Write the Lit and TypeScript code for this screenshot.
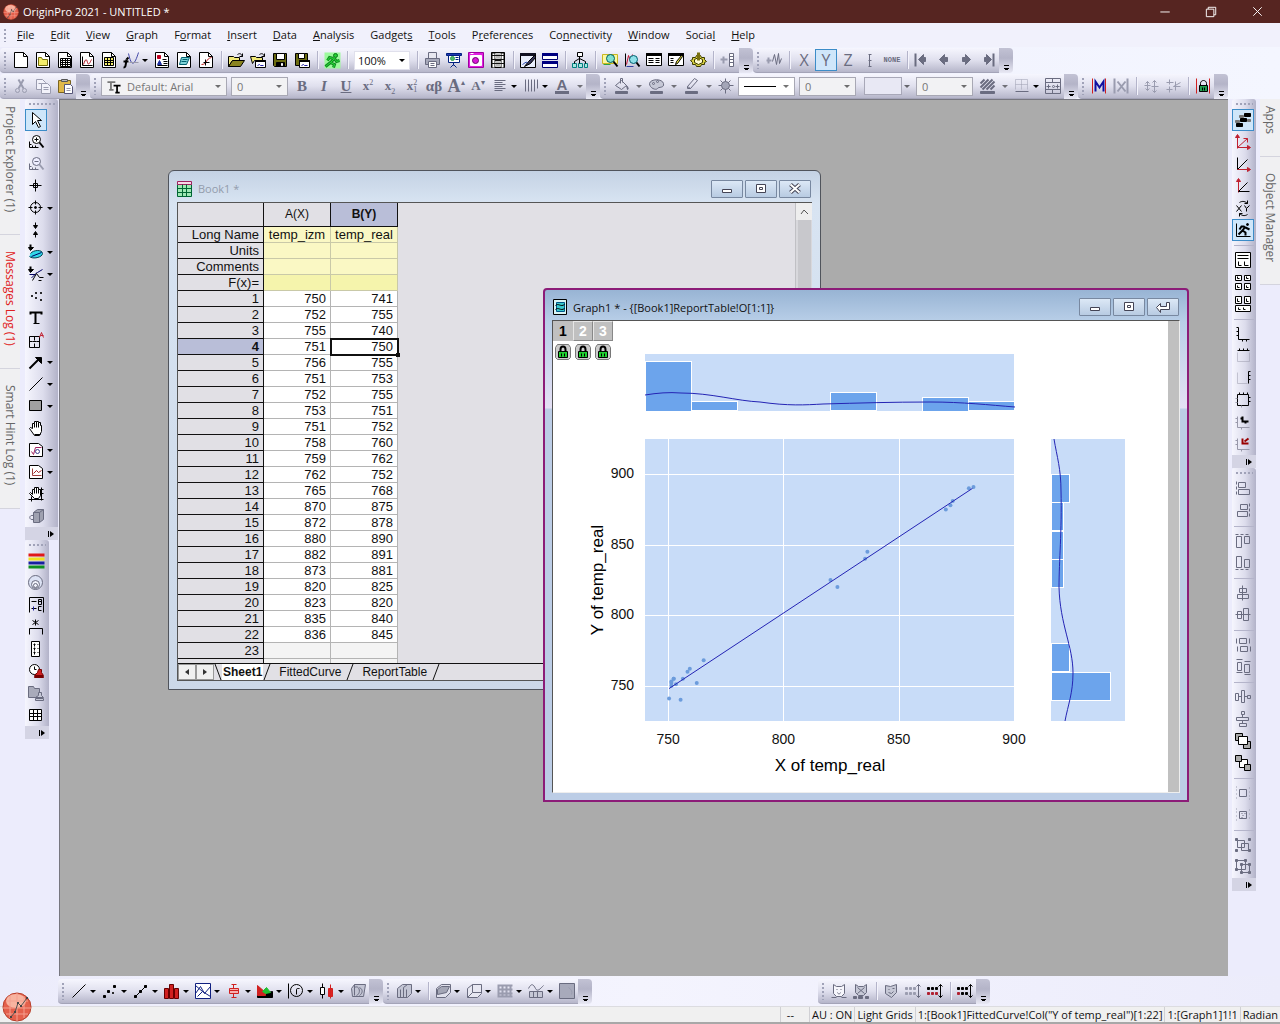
import { LitElement, html, svg, css, nothing, TemplateResult } from "lit";
import { customElement } from "lit/decorators.js";
import { classMap } from "lit/directives/class-map.js";

/* Icon strokes are "stroke;fill;path;width". A path that starts with @ is a circle: @cx,cy,r */
const G = "#6a6c80";
const L = "#9a9caf";
const PAGE = "#000;#fff;M1 0h9l4 4v11H1z|#000;none;M10 0v4h4";
const ICONS: Record<string, string> = {
  project: PAGE,
  folder: PAGE + "|#77700a;#f4ee6c;M3 5h3l1 2h5v6H3z",
  workbook: PAGE + "|#000;none;M3 6h10v8H3zM3 8h10M3 10h10M3 12h10M5 6v8M8 6v8M10 6v8",
  graph: PAGE + "|#000;none;M3 4v9h10|#b01020;none;M4 12c2-6 3-6 4-2s3-1 4-3",
  matrix: PAGE + "|#000;#f4ee6c;M3 5h9v8H3z|#000;none;M3 8h9M3 10h9M6 5v8M9 5v8",
  func: "#000;none;M0 15c2 0 2-1 3-8M0 9h5;2|#000;none;M3 7l2-2;2|#4448a8;none;M5 1c3 14 6 12 10-1|#99a;none;M6 10h9",
  layout: PAGE + "|#c00020;#c00020;M3 3h3v3H3z|#2030a0;#2030a0;M3 12l2-4 2 4z|#000;none;M8 7h4M9 9h4M9 11h4M3 13h10",
  notes: PAGE + "|#006070;#7fd4d8;M5 5h8l-3 7H3z|#006070;none;M6 7h5M5 9h5",
  digitize: PAGE + "|#c02020;none;M3 12c6 0 4-6 10-7|#000;none;M7 7v6M5 10h6",
  open: "#000;#f0e878;M0 4h5l1 1h5v3H4l-4 6z|#000;#8a8420;M4 8h12l-4 6H0z|#000;none;M9 2c3-2 4 0 5 2M14 1v3h-3",
  opentpl: "#000;#f0e878;M0 4h5l1 1h6v3H4l-2 3z|#000;none;M9 2c3-2 4 0 5 2M14 1v3h-3|#000;#fff;M5 8h10v7H5z|#000;#446;M5 8h10v1H5z|#22a;none;M7 13l2-1 1 1h3",
  save: "#000;#6b6b10;M1 1h13v13H2l-1-1z|#000;#fff;M4 1h8v6H4z|#000;#000;M4 10h8v4H4z|#fff;#fff;M9 11h1v2H9z",
  savetpl: "#000;#6b6b10;M1 1h12v12H1z|#000;#fff;M4 1h6v5H4z|#000;#fff;M5 8h10v7H5z|#000;#446;M5 8h10v1H5z|#22a;none;M7 13l2-1 1 1h3",
  run: "none;#9dfa9d;M0 0h16v16H0z|#087818;#20d030;@11,3,2|#108a20;none;M10 6L6 10l4 2-1 3M9 6L5 5 3 8M6 10l-5 4M10 6l2 3 3-1;3|#25e035;none;M10 6L6 10l4 2-1 3M9 6L5 5 3 8M6 10l-5 4M10 6l2 3 3-1",
  print: `${G};#e8e8f0;M4 0h8v6H4z|${G};#a7a9ba;M1 6h14v6H1z|${G};#fff;M4 9h8v6H4z|${G};none;M6 11h4M6 13h4`,
  slides: "#002080;#2038b0;M0 1h15v2H0z|#002080;#fff;M2 3h11v7H2z|#30a050;#50b870;@6,6,2|#002080;none;M9 5h3M9 7h3M7 10v3M4 15l3-3 3 3",
  camera: "#a000a0;#e020e0;M0 0h15v15H0z|#fff;#fff;M2 3h11v10H2z|#700070;#d818d8;@7,8,3|#fff;none;M2 1h3",
  film: "#000;#111;M1 0h13v15H1z|#ccc;#b8b8b8;M5 1h5v5H5zM5 9h5v5H5z|#fff;none;M3 1v14M12 1v14;2|#111;none;M1 3h13M1 7h13M1 11h13",
  brush: "#000;#e9eefc;M0 1h15v14H0z|#112;#112;M0 1h15v2H0z|#000;#335;M15 2L8 9l-4 5 6-3 5-6z|#2848b0;none;M2 12c2-1 3-3 5-2",
  split: "#000070;#fff;M0 1h15v6H0zM0 9h15v6H0z|#000080;#000080;M0 1h15v2H0zM0 9h15v2H0z",
  tree: "#000;#fff;M5 0h5v4H5z|#008080;#a8e8e0;M0 11h4v4H0zM6 11h4v4H6zM12 11h3v4h-3z|#000;none;M7 4v7M2 11V9l5-3 6 3v2",
  find: "#c8b820;#fbf7a0;M0 2h15v9H0z|#006060;#7fe0d0;@8,6,4|#000;none;M11 9l4 5;2|#30a040;none;M1 12h7",
  findgraph: "#000;none;M1 1v13|#c01030;none;M2 12l2-9 2 5 2-6|#006070;#8fe0e8;@9,7,4|#000;none;M12 10l3 4;2|#3040a0;none;M2 14h7",
  results: "#000;#fff;M0 1h15v12H0z|#000;#000;M0 1h15v2H0z|#000;none;M2 6h5M2 8h5M2 10h5M9 6h4M9 8h4M9 10h4",
  script: "#000;#fff;M0 1h15v12H0z|#000;#000;M0 1h15v2H0z|#000;none;M2 6h3M2 8h3M2 10h3|#000;#e8e040;M13 3l1 1-5 7-2 1 1-3z",
  gear: "#3a3a00;#d8d040;M0 8l2-1 0-2 3 0 1-2 4 0 1 2 3 0 0 2 2 2-2 1 0 2-3 0-1 2H6l-1-2H2v-2z|#3a3a00;#fffbd0;M4 7l4-2 4 2v3l-4 2-4-2z|#776f10;none;M8 0v8;3",
  addcol: `${L};none;M0 7h7M3 4v7;2|${G};#fff;M9 1h4v13H9z|${G};none;M9 4h4M9 7h4M9 10h4`,
  wave: `${L};none;M0 8h5M2 5v6;2|${G};none;M6 9l2-7 2 10 2-11 1 10 2-5`,
  errbar: `${G};none;M7 2v12M6 2h3M6 14h3M6 8h3`,
  first: `${G};none;M1 1v13;2|${G};${G};M4 7l5-5v3h2v4H9v3z`,
  prev: `${G};${G};M3 7l5-5v3h3v4H8v3z`,
  next: `${G};${G};M12 7L7 2v3H4v4h3v3z`,
  last: `${G};none;M13 1v13;2|${G};${G};M11 7L6 2v3H4v4h2v3z`,
  cut: `${L};none;M5 1l5 9M10 1L5 10;2|${L};none;@4,12,2|${L};none;@11,12,2`,
  copy: `${L};#f2f2fa;M1 1h6l3 3v7H1z|${L};#f2f2fa;M6 5h6l3 3v7H6z|${L};none;M8 9h5M8 11h5M3 5h3`,
  paste: "#7a6420;#e0b848;M1 2h12v12H1z|#555;#bbb;M4 1h6v2H4z|#557;#fff;M7 6h6l2 2v7H7z|#99a;none;M9 10h4M9 12h4",
  tt: "#777;none;M0 3h9M4 3v9M2 12h5;2|#000;none;M7 7h8M11 7v8M9 15h5;2",
  alignl: `${G};none;M2 2h11M2 4h8M2 6h11M2 8h8M2 10h11M2 12h8`,
  cols: `${G};none;M2 1v12M5 1v12M8 1v12M11 1v12M14 1v9`,
  bucket: `${G};none;M2 7l6-5 5 5-5 4zM7 5V0h2v4|${G};${G};M13 7c2 2 2 4 1 4zM2 13h12v2H2z`,
  palette: `${G};#c6c8d6;M1 5c1-5 13-5 14 0s-5 3-6 5-8 0-8-5z|${G};none;@5,5,1|${G};none;@9,3,1|${G};${G};M2 13h12v2H2z`,
  pen: `${G};none;M4 8l7-8 3 2-7 8H4zM4 8l3 2|${G};${G};M2 13h12v2H2z`,
  bulb: `${G};#a4a6b8;@7,7,4|${G};none;M7 0v3M7 11v4M0 7h3M11 7h4M2 2l2 2M12 2l-2 2M2 12l2-2M12 12l-2-2`,
  hatch: `${G};none;M1 5l4-4M1 9l8-8M3 11L13 1M7 11l8-8M11 11l4-4;2|${G};${G};M1 13h14v2H1z`,
  gridl: `${L};none;M1 1v10M13 1v10M1 1h12M7 1v10M1 6h12;.5|${G};none;M1 13h13`,
  merge: `${G};none;M0 0h15v15H0zM0 4h15M0 11h15M7 0v4M7 11v4M1 8h4M10 8h4M3 6v4M12 6v4|${G};none;@8,8,1`,
  mask: "#d02020;none;M1 0v15M14 0v15|#1010a0;none;M4 13V3l4 6 4-6v10;2",
  unmask: `${L};none;M1 0v15M14 0v15M4 3l8 10M12 3L4 13;2`,
  swap: `${L};none;M4 3v9M1 7h6M2 5l2-2 2 2M2 10l2 2 2-2M11 2v12M8 8h7M9 4l2-2 2 2M9 12l2 2 2-2`,
  swap2: `${L};none;M4 1v5M1 4h7M4 8v6M1 11h6M10 3v9M8 8h7M8 8l7-4`,
  lock: "#d02020;none;M1 0v15M14 0v15|#000;#20a050;M4 7h8v6H4z|#000;none;M5 7V5c0-4 6-4 6 0v2M7 9v3M9 9v3",
  padlock: "#777;#ccc;M2 0h11l2 3v10l-2 2H2l-2-2V3z|#000;#20d030;M3 7h9v6H3z|#000;none;M5 7V5c0-4 5-4 5 0v2;2|#000;none;M6 9v3M9 9v3",
  pointer: "#000;#fff;M4 0v12l3-3 3 6 2-1-3-6h4z",
  zoomin: "#000;#fff;@8,5,4|#000;none;M6 5h4M8 3v4M1 7v6h9M1 10h2M4 13v-2M7 13v-2|#000;none;M11 8l4 5;2",
  zoomout: `${G};#eef;@8,5,4|${G};none;M6 5h4M1 7v6h9M1 10h2M4 13v-2M7 13v-2|${L};none;M11 8l4 5;2`,
  cross: "#000;none;M7 1v12M1 7h12M5 5h4v4H5z",
  target: "#000;none;@7,7,5|#000;none;M7 0v4M7 10v4M0 7h4M10 7h4|#000;#000;@7,7,1",
  vpair: "#000;none;M7 0v5M7 10v5|#000;#000;M5 3h4L7 6zM5 12h4L7 9z",
  bean: "#004050;#30d8e8;M2 9c3-4 12-4 12 0s-10 6-13 3|#006;none;M3 12l10-4|#000;none;M2 0v4;2|#000;#000;M0 3h5L2 6z",
  curve: "#000060;none;M3 11c4-2 3-4 6-5l5-3M1 8h6|#000;none;M2 0v4;2|#000;#000;M0 3h5L2 6z|#000;none;M4 14l4-7 3 4h4M10 14h3",
  dots: "#000;#000;M3 7h1v1H3zM7 4h1v1H7zM12 4h1v1h-1zM7 9h1v1H7zM12 11h1v1h-1z",
  text: "#000;none;M2 4V2h11v2M7 2v11;2|#000;none;M5 13h6",
  regionA: "#000;none;M1 4h10v11H1zM6 4v4M6 11v4M1 9h3M8 9h3M4 9h4|#c02030;none;M11 5l2-5 2 5M12 3h3",
  arrow: "#000;none;M1 14L11 4;2|#000;#000;M7 3h6v6z",
  line: "#000;none;M1 14L14 1",
  rect: "#000;#a0a0a0;M1 2h12v10H1z",
  hand: "#000;#fff;M4 8V3h2V1h2v0h2v1h2v3h1v6l-2 4H6L1 8l1-1z|#000;none;M6 3v4M8 1v6M10 2v5M6 14h6",
  sqrt: "#000;#fff;M1 1h9l4 3v10H1z|#a02060;none;M3 9l2 3 2-7h6|#404090;none;@9,9,2",
  pgraph: "#000;#fff;M1 1h9l4 3v10H1z|#a04040;none;M4 4v7h9|#a02020;none;M5 9l3-3 2 2 3-2",
  handax: "#000;#fff;M4 8V3h2V1h4v2h2v6l-2 3H6L1 7l1-1z|#000;none;M6 3v4M8 1v6M10 3v4M0 13h15M3 10v5M13 1v13M12 3h3M12 7h3",
  cube: `${G};#9fa1b0;M5 4l4-3h6v10l-4 3H5zM5 4h6v10M11 4l4-3|${G};none;M5 7c-5-1-5 5 0 4`,
  bars4: "none;#e01818;M0 0h16v3H0z|none;#f0e020;M0 4h16v3H0z|none;#1820a0;M0 8h16v3H0z|none;#109020;M0 12h16v3H0z",
  rings: `${G};#dce2f4;@7,7,7|${G};#f0f2fb;@7,9,4|${G};none;@7,10,2`,
  axisbc: "#000;none;M1 15V0h14v15M3 4h5M3 11h5|#2020a0;none;M5 9v4|#000;none;M10 2v5M10 2h3v5h-3M10 4h3M13 9h-3v4h3",
  starbr: "#000;none;M7 0v6M4 1l6 4M10 1L4 5|#000;none;M1 15V9h13v6",
  plusbox: "#000;#fff;M3 0h8v15H3z|#000;none;M5 3h2M9 3h1M5 7h2M9 7h1M5 11h2M9 11h1M6 2v3M6 6v3M6 10v3",
  stamp: "#000;#fff;@6,6,5|#000;none;M6 3v3h2|#700;#d02020;M10 6h3v3l2 3H6l3-3zM6 13h9v1H6z",
  gstamp: `${G};#a9abba;M0 1h5l1 2h5v9H0z|${G};#c6c8d6;M10 7h3v3l2 2H7l3-2zM7 13h8v2H7z`,
  table: "#000;#fff;M1 2h12v11H1z|#000;none;M1 6h12M1 9h12M5 2v11M9 2v11",
  blocks: "#000;#000;M9 1h6v3H9zM5 6h6v3H5zM1 11h6v3H1z|#777;#777;M4 3h4v2H4zM12 7h3v2h-3zM0 8h4v2H0z",
  axr1: "#c02030;none;M2 14V2M2 13h12M2 13L12 4M8 4h4v4|#c02030;#c02030;M0 3l2-3 2 3zM12 11l3 2-3 2z",
  axr2: "#000;none;M2 13V1M2 13L12 3|#c02030;none;M2 13h12|#c02030;#c02030;M12 11l3 2-3 2z",
  axr3: "#c02030;none;M3 14V2|#c02030;#c02030;M1 3l2-3 2 3z|#000;none;M3 13h11M3 13L12 4",
  xy: "#000;none;M1 5l5 6M6 5l-5 6M9 5l2 3 3-3M11 8v3|#000;none;M4 2c3-2 6-1 8 1M12 14c-3 2-6 1-8-1M9 3h3V0M7 13H4v3",
  runner: "#000;none;M1 1v13h14|#000;#000;@12,2,1|#000;none;M10 4L7 8l3 2v3M9 4L6 4 4 7M7 8l-4 4M10 5l4 2;2",
  lay1: "#000;#fff;M0 0h15v15H0z|#000;none;M2 3h11M2 6h11M3 9v4h3M9 9v4h4",
  lay4: "#000;#fff;M0 1h6v5H0zM9 1h6v5H9zM0 9h6v6H0zM9 9h6v6H9z|#000;none;M2 2v2h2M11 2v2h2M2 11v2h2M11 11v2h2",
  lay3: "#000;#fff;M0 0h6v7H0zM9 0h6v7H9zM0 9h15v6H0z|#000;none;M2 2v3h2M11 2v3h2M3 11v2h2M8 11v2h2",
  axL: "#000;none;M3 1v12h11M1 1h2M1 5h2M1 9h2M7 13v2M11 13v2",
  axT: "#000;none;M2 2h12M4 0v2M8 0v2M12 0v2|#99a;none;M2 4v9h12V4;.5",
  axR: "#000;none;M13 1v12M15 1h-2M15 5h-2M15 9h-2|#99a;none;M2 2v11h10;.5",
  axB: "#000;none;M2 2h11v11H2zM4 0v2M8 0v2M12 0v2M15 5h-2M15 9h-2|#99a;none;M0 6h2M0 10h2M6 13v2",
  axS: "#99a;none;M2 2v11h12M0 4h2M0 8h2M6 13v2|#000;none;M7 2v5h6M5 4h2M10 7v2;2",
  axC: "#99a;none;M2 2v11h12M0 4h2M0 8h2M6 13v2|#900;none;M7 2v5h6M9 5l4-3;2",
  al1: `${G};none;M1 0v3M1 5v3M1 10v3M3 1h7v5H3zM3 8h11v5H3z`,
  al2: `${G};none;M14 0v3M14 5v3M14 10v3M5 1h7v5H5zM2 8h10v5H2z`,
  al3: `${G};none;M0 1h3M5 1h3M10 1h3M1 3h5v11H1zM9 3h5v7H9z`,
  al4: `${G};none;M0 14h3M5 14h3M10 14h3M1 1h5v11H1zM9 4h5v8H9z`,
  al5: `${G};none;M7 0v15M4 3h7v4H4zM2 9h11v4H2z`,
  al6: `${G};none;M0 7h15M2 4h4v7H2zM8 1h5v12H8z`,
  al7: `${G};none;M4 1h7v5H4zM5 9h7v5H5zM1 1v5M14 1v5M2 9v5M15 9v5`,
  al8: `${G};none;M2 3h4v8H2zM9 5h5v8H9zM1 0h6M9 2h6M9 15h6M1 13h6`,
  al9: `${G};none;M0 4h3v7H0zM6 1h3v12H6zM12 6h3v3h-3zM3 7h3M9 7h3`,
  al10: `${G};none;M6 0h3v3H6zM1 6h12v3H1zM4 12h7v3H4zM7 3v3M7 9v3`,
  front: "#000;#aaa;M0 0h7v7H0zM8 8h7v7H8z|#000;#fff;M3 3h9v8H3z",
  back: "#000;#fff;M4 4h8v8H4z|#000;#aaa;M0 0h6v6H0zM9 9h6v6H9z",
  grp1: `${G};none;M4 4h7v7H4z|${L};none;M1 1v1M1 4v1M1 8v1M1 12v1M14 2v1M14 6v1M14 10v1M14 13v1`,
  grp2: `${G};none;M4 4h7v7H4zM6 6h1M9 6h1M7 8h1M6 10h1|${L};none;M1 1v1M1 4v1M1 8v1M1 12v1M14 2v1M14 6v1M14 10v1`,
  grp3: `${G};none;M2 3h7v7H2zM6 6h7v7H6z|${G};${G};M0 1h2v2H0zM13 1h2v2h-2zM0 12h2v2H0zM13 12h2v2h-2z`,
  grp4: `${G};none;M1 1h9v9H1zM6 5h8v8H6z|${G};${G};M0 0h2v2H0zM9 0h2v2H9zM0 9h2v2H0zM5 4h2v2H5zM13 4h2v2h-2zM5 12h2v2H5zM13 12h2v2h-2z`,
  scatter: "#000;#000;M1 12h2v2H1zM5 7h2v2H5zM10 9h1v1h-1zM11 2h2v2h-2z",
  linesym: "#000;none;M1 14L13 2|#000;#000;M1 12h2v2H1zM6 7h2v2H6zM11 2h2v2h-2z",
  column: "#600;#d02020;M0 5h4v10H0zM5 1h4v14H5zM10 5h4v10h-4z",
  waveplot: "#102080;#fff;M0 0h15v15H0z|#102080;none;M0 10L5 3l4 7 6-7M0 2l7 6 8 5M2 13l5-5",
  box: "#d02020;#f8b0b0;M3 5h9v5H3zM5 1h5M7 1v4M7 10v4M5 14h5M3 7h9",
  area: "#000;#000;M0 14V11l15-3v6z|#d02020;#d02020;M0 2l8 7v3H0z|#20c030;#20c030;M5 8l4-4 4 5-5 1z",
  polar: "#000;none;M0 0v15M8 11V6c0-1 1-1 3-1|#000;none;@8,7,6",
  candle: "#000;#fff;M1 4h4v7H1zM3 0v4M3 11v4|#d02020;#e02020;M9 5h4v8H9zM11 1v14",
  c3d: `${G};#c3c5d4;M1 5l3-4h11l-2 12H2z|${G};none;M4 4c5-3 7 6 2 8M9 4c4 2 3 6 0 8M4 1v11`,
  bar3d: `${G};#c3c5d4;M1 5l5-4h9v9l-4 4H1z|${G};none;M4 6v8M7 4v10M10 6v8M7 4l4-3`,
  surf: `${G};#e0e0ec;M1 5l5-4h9v8l-5 5H1z|${G};#a4a6b6;M2 6l4-3h8l-3 6-9 2z`,
  box3d: `${G};#e8e8f2;M1 5l5-4h9v9l-4 4H1zM6 1v8L1 14M6 9h9`,
  mesh: `${L};none;M1 1v13M5 1v13M9 1v13M13 1v13M0 2h15M0 6h15M0 10h15M0 13h15;2`,
  contour: `${G};none;M0 5c3-6 5-4 7 0s5 0 8-3|${G};#c6c8d6;M1 8h13v6H1zM5 8v6M9 8v6`,
  image: `${G};#a8aabb;M0 0h15v15H0z|${L};none;M9 4c3 2 4 4 3 7`,
  cat: `${G};#f6f6fc;M2 1l3 2h5l3-2v9l-3 3H5l-3-3z|${G};none;M5 6h1M9 6h1M6 9c1 2 2 2 3 0M0 14h5M10 14h5`,
  cat2: `${G};#c6c8d6;M2 1l3 2h5l3-2v8l-3 3H5L2 9z|${G};none;M4 4l7 6M11 4l-7 6|${G};${G};M0 13h3v2H0zM5 13h4v2H5zM12 13h3v2h-3z`,
  shield: `${G};#c6c8d6;M2 2l5 1 6-2v8l-5 5-6-4z|${G};none;M5 6h1M9 5h2M5 9l3 1 2-2`,
  sp1: `${L};${L};M0 4h2v2H0zM4 4h2v2H4zM8 4h2v2H8zM0 9h2v2H0zM4 9h2v2H4zM8 9h2v2H8z|${G};none;M13 1v13M11 3l2-2 2 2M11 12l2 2 2-2`,
  sp2: "#000;#000;M0 4h2v2H0zM4 4h2v2H4zM8 4h2v2H8z|#b02030;#b02030;M0 9h2v2H0zM4 9h2v2H4zM8 9h2v2H8z|#000;none;M13 1v13M11 3l2-2 2 2M11 12l2 2 2-2",
  sp3: "#000;#000;M0 4h2v2H0zM4 4h2v2H4zM8 4h2v2H8zM4 9h2v2H4zM8 9h2v2H8z|#b02030;#b02030;M0 9h2v2H0z|#000;none;M13 1v13M11 3l2-2 2 2M11 12l2 2 2-2",
  book: "#063;#9ee8b4;M0 3h14v12H0z|#a02060;#f8d8e8;M0 0h14v3H0z|#063;none;M0 7h14M0 11h14M5 3v12M9 3v12",
  graphwin: "#000;#d8f4f4;M1 0h13v15H1z|#058;#38c8cc;M4 3h8v9H4z|#000;none;M3 6c3-3 5 2 9-1M3 10c3-3 5 2 9-1",
  min: "#445;#fff;M3 8h9v3H3z",
  max: "#445;#fff;M3 3h9v8H3zM6 6h3v2H6z",
  close: "#445;none;M3 3l9 8M12 3l-9 8;4|#fff;none;M3 3l9 8M12 3l-9 8;2",
  ret: "#445;#fff;M1 8l4-4v3h6V3h3v7H5v3z",
  winmin: "#fff;none;M2 8h10",
  winmax: "#fff;none;M2 5h8v8H2zM4 5V3h8v8h-2",
  winclose: "#fff;none;M3 3l9 9M12 3l-9 9",
};

function icon(name: string, size = 16) {
  const parts = ICONS[name].split("|").map((part) => {
    const [stroke, fill, d, w] = part.split(";");
    if (d[0] === "@") {
      const [cx, cy, r] = d.slice(1).split(",");
      return svg`<circle cx=${cx} cy=${cy} r=${r} stroke=${stroke} fill=${fill}></circle>`;
    }
    return svg`<path d=${d} stroke=${stroke} fill=${fill} stroke-width=${w ?? "1"}></path>`;
  });
  return html`<svg class="icon" width=${size} height=${size} viewBox="0 0 16 16" aria-hidden="true">
    <g transform="translate(.5 .5)">${parts}</g>
  </svg>`;
}

const caret = html`<span class="caret"></span>`;
const sep = html`<span class="sep"></span>`;
const grip = html`<span class="grip"></span>`;
const cap = html`<button class="cap" aria-label="Toolbar options"></button>`;

/* Toolbar spec: "|" separator, name, "name>" with caret, "name>>" with a wide caret, "name*" pressed */
function tools(spec: string): TemplateResult[] {
  return spec.split(" ").map((t) => {
    if (t === "|") return sep;
    const wide = t.endsWith(">>");
    const drop = t.endsWith(">");
    const name = t.replace(/[>*]/g, "");
    return html`<button class=${classMap({ tool: true, on: t.endsWith("*") })} aria-label=${name}>
        ${icon(name)}</button>${drop ? html`<span class=${classMap({ drop: true, wide })}>${caret}</span>` : nothing}`;
  });
}

function glyph(label: string, cls: string, content: unknown = label, on = false) {
  return html`<button class=${classMap({ tool: true, glyph: true, on, [cls]: true })} aria-label=${label}>${content}</button>`;
}

function combo(label: string, value: string, cls: string, extra: unknown = nothing) {
  return html`<span class="combo ${cls}">${extra}<select aria-label=${label}><option>${value}</option></select>${caret}</span>`;
}

const ROWS: [number, number][] = [
  [750, 741], [752, 755], [755, 740], [751, 750], [756, 755], [751, 753], [752, 755], [753, 751],
  [751, 752], [758, 760], [759, 762], [762, 752], [765, 768], [870, 875], [872, 878], [880, 890],
  [882, 891], [873, 881], [820, 825], [823, 820], [835, 840], [836, 845],
];

/* Chart area in the graph page: scatter plot with marginal histograms */
const PLOT = { x: 92, y: 118, w: 369, h: 282 };
const TOP = { y: 33, h: 57 };
const SIDE = { x: 498, w: 74 };
const sx = (v: number) => PLOT.x + ((v - 740) * PLOT.w) / 160;
const sy = (v: number) => PLOT.y + ((925 - v) * PLOT.h) / 200;
const bins = (col: 0 | 1) =>
  [740, 760, 780, 800, 820, 840, 860, 880]
    .map((lo) => ({ lo, n: ROWS.filter((r) => r[col] >= lo && r[col] < lo + 20).length }))
    .filter((b) => b.n > 0);

@customElement("origin-chart")
export class OriginChart extends LitElement {
  static styles = css`
    :host { display: block; }
    svg { display: block; font-family: "Liberation Sans", Arial, sans-serif; fill: #111; }
    .area { fill: #c8dcf8; }
    .bar { fill: #6ca4ec; stroke: #fff; }
    .grid { stroke: #fff; fill: none; }
    .fit { stroke: #2424b4; fill: none; }
    .pt { fill: #6c9cdc; }
    .tick { font-size: 14px; text-anchor: middle; }
    .end { text-anchor: end; }
    .title { font-size: 17px; text-anchor: middle; fill: #000; }
  `;
  render() {
    return html`<svg width="615" height="472" viewBox="0 0 615 472" role="img" aria-label="Scatter plot of temp_real with marginal histograms">
      <rect class="area" x=${PLOT.x} y=${TOP.y} width=${PLOT.w} height=${TOP.h}></rect>
      ${bins(0).map((b) => svg`<rect class="bar" x=${Math.round(sx(b.lo)) + 0.5} y=${Math.round(TOP.y + TOP.h - b.n * 4.5) - 0.5}
        width="46" height=${Math.round(b.n * 4.5)}></rect>`)}
      <path class="fit" d="M92 74C104 72 116 71 128 72C158 72 184 80 207 81C235 85 252 84 270 83C306 82 340 81 377 81C410 81 436 84 462 86"></path>
      <rect class="area" x=${PLOT.x} y=${PLOT.y} width=${PLOT.w} height=${PLOT.h}></rect>
      ${[750, 800, 850].map((v) => svg`<path class="grid" d="M${Math.round(sx(v)) + 0.5} ${PLOT.y}v${PLOT.h}"></path>`)}
      ${[750, 800, 850, 900].map((v) => svg`<path class="grid" d="M${PLOT.x} ${Math.round(sy(v)) + 0.5}h${PLOT.w}"></path>`)}
      ${ROWS.map((r) => svg`<circle class="pt" cx=${sx(r[0]) + 1} cy=${sy(r[1])} r="2"></circle>`)}
      <path class="fit" d="M${sx(750) + 1} ${sy(748)}L${sx(882)} ${sy(890)}"></path>
      <rect class="area" x=${SIDE.x} y=${PLOT.y} width=${SIDE.w} height=${PLOT.h}></rect>
      ${bins(1).map((b) => svg`<rect class="bar" x=${SIDE.x + 0.5} y=${Math.round(sy(b.lo + 20)) + 0.5}
        width=${Math.round(b.n * 5.9)} height="28"></rect>`)}
      <path class="fit" d="M501 118C504 136 508 148 508 170C509 210 506 240 506 266C507 304 520 325 520 352C520 372 515 384 512 400"></path>
      ${[750, 800, 850, 900].map((v) => svg`<text class="tick" x=${sx(v)} y="423">${v}</text>
        <text class="tick end" x="81" y=${sy(v) + 4}>${v}</text>`)}
      <text class="title" x="277" y="450">X of temp_real</text>
      <text class="title" transform="translate(50 259) rotate(-90)">Y of temp_real</text>
    </svg>`;
  }
}

const MENUS = ["_File", "_Edit", "_View", "_Graph", "F_ormat", "_Insert", "_Data", "_Analysis", "Gadget_s", "_Tools",
  "P_references", "Co_nnectivity", "_Window", "Socia_l", "_Help"];

@customElement("app-root")
export class AppRoot extends LitElement {
  static styles = css`
    :host { display: flex; flex-direction: column; height: 100vh; min-height: 800px; overflow: hidden; background: #ececfc;
      font-family: "Open Sans", "Noto Sans", sans-serif; font-size: 11px; color: #111; }
    * { box-sizing: border-box; }
    button, select { font: inherit; color: inherit; margin: 0; padding: 0; border: 0; background: none; border-radius: 0; }
    .icon { display: block; flex: none; overflow: visible; }
    .titlebar { display: flex; align-items: center; height: 23px; flex: none; background: #562521; color: #fff; padding-left: 3px; gap: 4px; }
    .titlebar .name { flex: 1; }
    .titlebar .btns { display: flex; }
    .titlebar button { width: 46px; height: 22px; display: grid; place-items: center; }
    .menubar { display: flex; align-items: center; height: 24px; flex: none; background: #f1f1fc; padding-bottom: 1px; }
    .menubar button { padding: 0 8px; white-space: nowrap; }
    .bar { display: flex; align-items: flex-end; height: 26px; flex: none; background: linear-gradient(90deg, #ececfb, #f4f6ff); }
    .strip { display: flex; align-items: center; height: 25px; border-radius: 4px 0 0 4px; flex: none;
      background: linear-gradient(#f6f6fe, #e0e0ee 50%, #b6b6ca); border-bottom: 1px solid #a4a4b8; }
    .grip { width: 10px; height: 18px; flex: none;
      background: radial-gradient(circle at 1px 1px, #a0a2b8 1px, transparent 1px) 4px 1px / 10px 4px repeat-y; }
    .menubar .grip { width: 9px; height: 14px; }
    .tool { width: 22px; height: 22px; flex: none; display: grid; place-items: center; }
    .on { background: #cfe6fa; border: 1px solid #3c8cc8; }
    .sep { width: 8px; height: 18px; flex: none; background: linear-gradient(90deg, transparent 4px, #b4b4ca 4px, #b4b4ca 5px, #f4f4fc 5px, #f4f4fc 6px, transparent 6px); }
    .drop { width: 9px; display: flex; align-items: center; flex: none; }
    .drop.wide { width: 13px; opacity: .5; justify-content: center; }
    .vrow .drop { width: 9px; }
    .caret { border: 3px solid transparent; border-top: 3px solid #000; border-bottom: 0; width: 0; height: 0; flex: none; }
    .cap { width: 14px; height: 25px; flex: none; border-radius: 0 4px 4px 0;
      background: linear-gradient(#000, #000) 50% 17px / 5px 1px no-repeat, linear-gradient(#000, #000) 50% 20px / 5px 1px no-repeat,
      linear-gradient(#000, #000) 50% 21px / 3px 1px no-repeat, linear-gradient(#c2c2d4, #b4b4c8 40%, #e8e8f4); }
    .glyph { font-family: "Liberation Serif", serif; font-weight: bold; font-size: 15px; line-height: 20px; color: #6a6c80; white-space: nowrap; }
    .italic { font-style: italic; }
    .under { text-decoration: underline; }
    .small { font-size: 13px; }
    .big { font-size: 18px; }
    .sans { font-family: "Open Sans", sans-serif; font-weight: normal; font-size: 16px; }
    .tiny { font-family: "Liberation Mono", monospace; font-size: 7px; }
    .color-a { font-family: "Liberation Sans", sans-serif; }
    .color-a span { border-bottom: 3px solid #6a6c80; line-height: 13px; padding: 0 2px; }
    sup, sub { font-size: 8px; line-height: 0; font-weight: normal; }
    .pair { display: flex; align-items: center; }
    .pair .stack { display: flex; flex-direction: column; font-size: 8px; line-height: 7px; font-weight: normal; }
    .combo { display: flex; align-items: center; height: 19px; flex: none; margin: 0 3px 0 1px; padding: 0 5px;
      width: 57px; background: #f2f2f4; border: 1px solid #a8a8b4; color: #777; }
    .combo select { appearance: none; flex: 1; min-width: 0; width: 0; outline: none; }
    .combo .caret { opacity: .55; }
    .zoom { background: #fff; color: #111; border-color: #e0e0ec; margin: 0 3px; width: 56px; padding: 0 4px 0 3px; }
    .zoom .caret { opacity: 1; }
    .font { width: 126px; gap: 6px; }
    .stroke { background: #fff; }
    .stroke::before { content: ""; width: 32px; border-top: 1px solid #000; }
    .color { width: 52px; border: 0; background: none; padding: 0 2px 0 4px; }
    .color::before { content: ""; width: 36px; height: 16px; border: 1px solid #a8a8b8; background: #e8e8f4; margin-right: 2px; }
    .main { flex: 1; min-height: 0; display: flex; }
    .tabs { display: flex; flex-direction: column; width: 20px; flex: none; font-size: 12px; }
    .tabs button { writing-mode: vertical-rl; padding: 16px 1px 22px; background: #f0f0f2; border-bottom: 1px solid #d4d4de; color: #666; width: 20px; text-align: start; }
    .tabs button:first-child { padding-top: 7px; }
    .tabs .alert { color: #e02020; }
    .leftdock { width: 59px; display: flex; gap: 5px; flex: none; }
    .rightdock { width: 52px; display: flex; gap: 4px; flex: none; padding-left: 4px; }
    .column { flex: 1; display: flex; flex-direction: column; align-items: flex-start; }
    .vstrip { display: flex; flex-direction: column; width: 24px; border-radius: 3px 3px 0 0; flex: none;
      background: linear-gradient(90deg, #f6f6fe, #dcdcec 55%, #b2b2c8); }
    .vstrip.wide { width: 33px; }
    .vgrip { height: 10px; margin: 0 3px; background: radial-gradient(circle at 1px 1px, #a0a2b8 1px, transparent 1px) 1px 4px / 4px 10px repeat-x; }
    .vrow { display: flex; height: 22px; align-items: center; }
    .vsep { height: 8px; margin: 0 2px; background: linear-gradient(transparent 4px, #b4b4ca 4px, #b4b4ca 5px, transparent 5px); }
    .vcap { height: 13px; width: 100%; display: flex; align-items: center; justify-content: flex-end; padding-right: 4px; gap: 1px; background: #d4d4e4; }
    .vcap::before { content: ""; width: 1px; height: 6px; background: #000; }
    .vcap::after { content: ""; border: 3px solid transparent; border-left: 4px solid #000; border-right: 0; }
    .desk { flex: 1; position: relative; background: #ababab; border: solid #77777f; border-width: 1px 0 0 1px; overflow: hidden; min-width: 0; }
    .window { position: absolute; display: flex; flex-direction: column; padding: 0 8px 8px; border: 1px solid #50545c; border-radius: 6px 6px 0 0; }
    .book { left: 108px; top: 70px; width: 653px; height: 520px; background: linear-gradient(#c4d2e4, #d8e4f2 32px, #ccd8e8); }
    .graph { left: 483px; top: 188px; width: 646px; height: 514px; background: linear-gradient(#98b4d4, #b9cfe8 32px, #e4e0f4 118px, #bccde6 119px); border: 2px solid #8c1c78; padding: 0 7px 7px; border-radius: 4px 4px 0 0; }
    .caption { display: flex; align-items: center; height: 31px; flex: none; gap: 5px; color: #939cab; padding: 4px 1px 0 0; }
    .graph .caption { color: #111; height: 30px; }
    .caption .name { flex: 1; }
    .caption button { width: 32px; height: 18px; display: grid; place-items: center; border: 1px solid #7888a0; background: linear-gradient(#dce8f6, #b8cbe2); border-radius: 1px; }
    .caption .btns { display: flex; gap: 2px; }
    .sheet { flex: 1; min-height: 0; display: flex; flex-direction: column; background: #e1e0e5; border: 1px solid #555; border-right: 0; }
    .body { flex: 1; min-height: 0; display: flex; overflow: hidden; justify-content: space-between; align-items: flex-start; }
    table { border-collapse: separate; border-spacing: 0; table-layout: fixed; width: 220px; font-family: "Liberation Sans", Arial, sans-serif; font-size: 13px; line-height: 15px; }
    .rowhead { width: 86px; }
    .datacol { width: 67px; }
    th, td { height: 16px; padding: 0 4px 0 0; text-align: right; font-weight: normal; border-bottom: 1px solid #b4b4b4; border-right: 1px solid #b4b4b4; white-space: nowrap; }
    td { background: #fff; }
    th { background: #e1e0e5; border-color: #111; }
    thead th { height: 24px; text-align: center; padding: 0; font-size: 12px; }
    thead .sel { background: #b9bed8; font-weight: bold; }
    tbody .sel { background: #b9bed8; font-weight: bold; }
    .meta td { background: #faf8c4; border-color: #c9c9a8; text-align: center; padding: 0; }
    .fx td { background: #f5f4ac; }
    .cur { position: relative; outline: 2px solid #111; outline-offset: -1px; }
    .cur::after { content: ""; position: absolute; right: -3px; bottom: -3px; width: 4px; height: 4px; background: #111; }
    .blank td { background: #f4f4f4; }
    .scroll { width: 17px; align-self: stretch; background: #d8d8dc; display: flex; flex-direction: column; align-items: center; border-left: 1px solid #c0c0c4; }
    .scroll button { background: #eee; width: 16px; height: 17px; display: grid; place-items: center; }
    .scroll::after { content: ""; flex: 1; width: 13px; background: #c8c8cc; }
    .sheets { display: flex; height: 17px; flex: none; align-items: center; border-top: 1px solid #111; background: #e1e0e5; font-family: "Liberation Sans", Arial, sans-serif; font-size: 12px; }
    .sheets button { height: 16px; padding: 0 5px 0 8px; }
    .sheets .nav { width: 18px; padding: 0; border: 1px solid #999; background: #f0f0f0; display: grid; place-items: center; }
    .sheets .active { background: #fff; font-weight: bold; padding: 0 1px; }
    .nav::before { content: ""; border: 3px solid transparent; border-right: 4px solid #333; border-left: 0; }
    .nav + .nav::before { border-right: 0; border-left: 4px solid #333; }
    .slash { display: block; flex: none; }
    .page { flex: 1; min-height: 0; position: relative; background: linear-gradient(90deg, #fff calc(100% - 11px), #c0c0c0 calc(100% - 11px)); border: 1px solid #555; border-color: #555 #eee #eee #555; overflow: hidden; }
    .layers { position: absolute; left: 0; top: 0; display: grid; grid-template-columns: repeat(3, 20px); row-gap: 3px; justify-items: center; }
    .layers button { width: 20px; height: 20px; background: #c0c0c0; color: #fff; border: 1px solid #e6e6e6; border-right-color: #888; border-bottom-color: #888;
      font-family: "Liberation Sans", Arial, sans-serif; font-weight: bold; font-size: 14px; line-height: 18px; }
    .layers .active { color: #000; border-color: #c0c0c0; }
    .bottom { display: flex; height: 30px; flex: none; padding: 3px 0 0 58px; background: linear-gradient(90deg, #ececfb, #f4f4fe 50%, #ececfb); }
    .bottom .right { margin-left: 226px; display: flex; }
    .status { display: flex; align-items: center; height: 18px; flex: none; background: #f0f0f0; justify-content: flex-end; border-top: 1px solid #dcdce0; border-bottom: 2px solid #a8a8a8; position: relative; white-space: nowrap; }
    .status span { padding: 0 2px; border-left: 1px solid #d0d0d4; line-height: 15px; }
    .status span:first-of-type { padding: 0 6px; }
    .status .gap { width: 9px; padding: 0; }
    .orb { position: absolute; left: 2px; bottom: -3px; }
  `;

  private vtools(spec: string) {
    return spec.split(" ").map((t) => (t === "|" ? html`<div class="vsep"></div>` : html`<div class="vrow">${tools(t)}</div>`));
  }

  private slash(back: boolean) {
    return html`<svg class="slash" width="8" height="16" viewBox="0 0 8 16" aria-hidden="true">
      <path d=${back ? "M1 0L7 16" : "M7 0L1 16"} stroke="#111" fill="none"></path></svg>`;
  }

  private orb(size: number) {
    return html`<svg width=${size} height=${size} viewBox="0 0 30 30" aria-hidden="true">
      <circle cx="15" cy="15" r="14" fill="#e4604c" stroke="#b8402c"></circle>
      <ellipse cx="14" cy="9" rx="10" ry="7" fill="#f8b4a0"></ellipse>
      <path d="M8 4v22M15 1v28M22 4v22M4 9h22M1 16h28M4 22h22" stroke="#f4a090" fill="none"></path>
      <path d="M9 25l4-5 3-9 3 3 6-8" stroke="#555" fill="none"></path>
      <path d="M8 24h2v2H8zM12 19h2v2h-2zM15 10h2v2h-2zM18 13h2v2h-2zM24 5h2v2h-2z" fill="#444"></path>
    </svg>`;
  }

  private menu(text: string) {
    const i = text.indexOf("_");
    return html`<button>${text.slice(0, i)}<u>${text[i + 1]}</u>${text.slice(i + 2)}</button>`;
  }

  private bookWindow() {
    return html`<section class="window book" aria-label="Book1">
      <header class="caption">${icon("book")}<span class="name">Book1 *</span>
        <span class="btns"><button aria-label="Minimize">${icon("min")}</button><button aria-label="Maximize">${icon("max")}</button><button aria-label="Close">${icon("close")}</button></span>
      </header>
      <div class="sheet">
        <div class="body">
          <table>
            <colgroup><col class="rowhead"><col class="datacol"><col class="datacol"></colgroup>
            <thead><tr><th></th><th>A(X)</th><th class="sel">B(Y)</th></tr></thead>
            <tbody>
              <tr class="meta"><th>Long Name</th><td>temp_izm</td><td>temp_real</td></tr>
              <tr class="meta"><th>Units</th><td></td><td></td></tr>
              <tr class="meta"><th>Comments</th><td></td><td></td></tr>
              <tr class="meta fx"><th>F(x)=</th><td></td><td></td></tr>
              ${ROWS.map(([a, b], i) => html`<tr><th class=${i === 3 ? "sel" : ""}>${i + 1}</th><td>${a}</td><td class=${i === 3 ? "cur" : ""}>${b}</td></tr>`)}
              <tr class="blank"><th>23</th><td></td><td></td></tr>
              <tr class="blank"><th></th><td></td><td></td></tr>
            </tbody>
          </table>
          <div class="scroll"><button aria-label="Scroll up"><svg width="9" height="6" viewBox="0 0 9 6"><path d="M1 5l3-4 4 4" fill="none" stroke="#555"></path></svg></button></div>
        </div>
        <div class="sheets">
          <button class="nav" aria-label="Previous sheet"></button><button class="nav" aria-label="Next sheet"></button>
          ${this.slash(true)}<button class="active">Sheet1</button>${this.slash(false)}<button>FittedCurve</button>${this.slash(false)}<button>ReportTable</button>${this.slash(false)}
        </div>
      </div>
    </section>`;
  }

  private graphWindow() {
    return html`<section class="window graph" aria-label="Graph1">
      <header class="caption">${icon("graphwin")}<span class="name">Graph1 * - {[Book1]ReportTable!O[1:1]}</span>
        <span class="btns"><button aria-label="Minimize">${icon("min")}</button><button aria-label="Maximize">${icon("max")}</button><button aria-label="Restore">${icon("ret")}</button></span>
      </header>
      <div class="page">
        <origin-chart></origin-chart>
        <div class="layers">
          <button class="active">1</button><button>2</button><button>3</button>
          ${[1, 2, 3].map(() => icon("padlock"))}
        </div>
      </div>
    </section>`;
  }

  render() {
    return html`
      <header class="titlebar">${this.orb(16)}<span class="name">OriginPro 2021 - UNTITLED *</span>
        <div class="btns"><button aria-label="Minimize">${icon("winmin", 15)}</button><button aria-label="Restore">${icon("winmax", 15)}</button><button aria-label="Close">${icon("winclose", 15)}</button></div>
      </header>
      <nav class="menubar">${grip}${MENUS.map((m) => this.menu(m))}</nav>
      <div class="bar">
        <div class="strip">${grip}${tools("project folder workbook graph matrix func> layout notes digitize | open opentpl save savetpl | run |")}
          ${combo("Zoom", "100%", "zoom")}${tools("| print slides camera film | brush split | tree | find findgraph results script gear | addcol")}</div>${cap}
        <div class="strip">${grip}${tools("wave |")}${glyph("X", "sans")}${glyph("Y", "sans", "Y", true)}${glyph("Z", "sans")}${tools("errbar")}${glyph("NONE", "tiny")}${tools("| first prev next last")}</div>${cap}
      </div>
      <div class="bar">
        <div class="strip">${grip}${tools("cut copy paste")}</div>${cap}
        <div class="strip">${grip}${combo("Font", "Default: Arial", "font", icon("tt", 14))}${combo("Font size", "0", "")}
          ${glyph("B", "bold")}${glyph("I", "italic")}${glyph("U", "under")}
          ${glyph("Superscript", "small", html`<span>x<sup>2</sup></span>`)}${glyph("Subscript", "small", html`<span>x<sub>2</sub></span>`)}
          ${glyph("Super-subscript", "small", html`<span class="pair">x<span class="stack"><span>2</span><span>1</span></span></span>`)}${glyph("Greek", "", "αβ")}
          ${glyph("Increase font", "big", html`<span>A<sup>▴</sup></span>`)}${glyph("Decrease font", "small", html`<span>A<sup>▾</sup></span>`)}${tools("alignl> cols>")}
          ${glyph("Font color", "color-a", html`<span>A</span>`)}<span class="drop wide">${caret}</span></div>${cap}
        <div class="strip">${grip}${tools("bucket>> palette>> pen>> bulb")}${combo("Line style", "", "stroke")}${combo("Line width", "0", "")}${combo("Border color", "", "color")}${combo("Pattern width", "0", "")}${tools("hatch>> gridl> merge")}</div>${cap}
        <div class="strip">${grip}${tools("mask unmask | swap swap2 | lock")}</div>${cap}
      </div>
      <div class="main">
        <aside class="leftdock">
          <div class="tabs"><button>Project Explorer (1)</button><button class="alert">Messages Log (1)</button><button>Smart Hint Log (1)</button></div>
          <div class="column">
            <div class="vstrip wide"><div class="vgrip"></div>${this.vtools("pointer* zoomin zoomout cross target> vpair bean> curve> dots text regionA arrow> line> rect> hand sqrt> pgraph> handax cube")}<button class="vcap" aria-label="Toolbar options"></button></div>
            <div class="vstrip"><div class="vgrip"></div>${this.vtools("bars4 rings axisbc starbr plusbox stamp gstamp table")}<button class="vcap" aria-label="Toolbar options"></button></div>
          </div>
        </aside>
        <main class="desk">${this.bookWindow()}${this.graphWindow()}</main>
        <aside class="rightdock">
          <div class="column">
            <div class="vstrip"><div class="vgrip"></div>${this.vtools("blocks* axr1 axr2 axr3 xy runner* | lay1 lay4 lay3 | axL axT axR axB axS axC")}<button class="vcap" aria-label="Toolbar options"></button></div>
            <div class="vstrip"><div class="vgrip"></div>${this.vtools("al1 al2 | al3 al4 | al5 al6 | al7 al8 | al9 al10 front back | grp1 grp2 | grp3 grp4")}<button class="vcap" aria-label="Toolbar options"></button></div>
          </div>
          <div class="tabs"><button>Apps</button><button>Object Manager</button></div>
        </aside>
      </div>
      <div class="bottom">
        <div class="strip">${grip}${tools("line> scatter> linesym> column> waveplot> box> area> polar> candle> c3d")}</div>${cap}
        <div class="strip">${grip}${tools("bar3d> | surf> box3d> mesh> contour> image")}</div>${cap}
        <div class="right"><div class="strip">${grip}${tools("cat cat2 | shield sp1 sp2 | sp3")}</div>${cap}</div>
      </div>
      <footer class="status"><div class="orb">${this.orb(30)}</div>
        <span>--</span><span class="gap"></span><span>AU : ON</span><span>Light Grids</span><span>1:[Book1]FittedCurve!Col("Y of temp_real")[1:22]</span><span>1:[Graph1]1!1</span><span>Radian</span>
      </footer>`;
  }
}
